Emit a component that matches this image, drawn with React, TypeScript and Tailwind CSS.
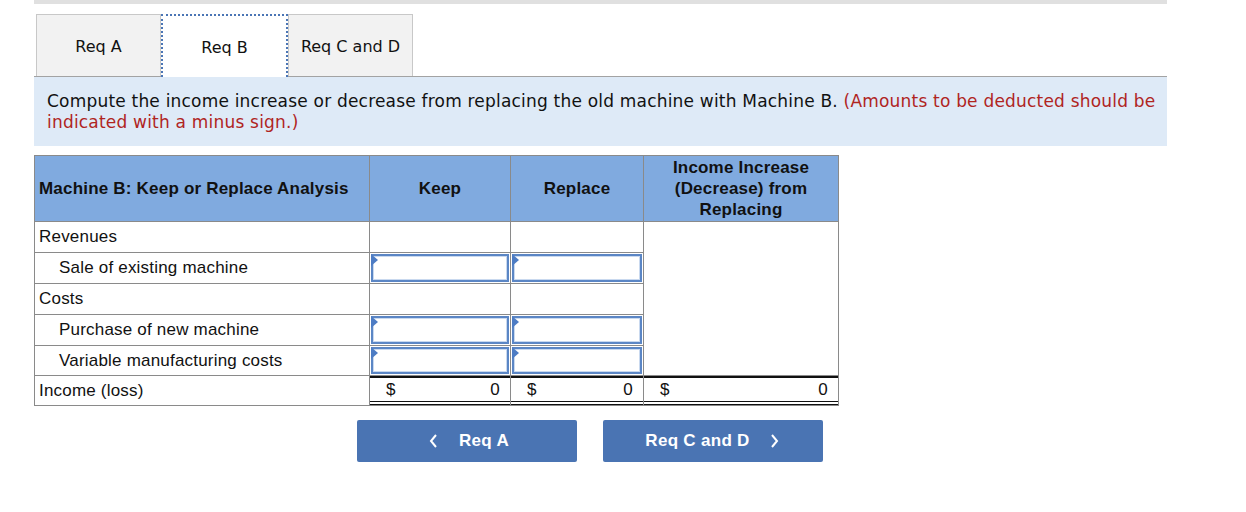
import React from "react";

const rows = [
  { label: "Revenues", indent: false, input: false },
  { label: "Sale of existing machine", indent: true, input: true },
  { label: "Costs", indent: false, input: false },
  { label: "Purchase of new machine", indent: true, input: true },
  { label: "Variable manufacturing costs", indent: true, input: true },
];

function InputCell() {
  return (
    <div className="relative h-full w-full p-px">
      <div className="h-full w-full border-2 border-[#5b86c5] bg-white shadow-[inset_0_0_0_1px_#c9d9ef]" />
      <span className="absolute left-px top-px h-0 w-0 border-y-[6px] border-l-[7px] border-y-transparent border-l-[#4d7cc4]" />
    </div>
  );
}

export default function App() {
  return (
    <div className="min-h-[512px] w-[1246px] bg-white pl-[34px] font-['DejaVu_Sans',sans-serif]">
      <div className="h-1 w-[1133px] bg-[#e0e0e0]" />

      {/* tabs */}
      <div className="mt-[10px] flex w-[1133px] border-b border-[#a3a3a3] pl-[2px]">
        <div className="flex h-[62px] w-[125px] items-center justify-center border border-b-0 border-[#c8c8c8] bg-[#f2f2f2] pt-[3px] text-[16px] text-[#111]">
          Req A
        </div>
        <div className="-mb-px flex h-[63px] w-[127px] items-center justify-center border-2 border-b-0 border-dotted border-[#4a75b5] bg-white pt-[3px] text-[16px] text-[#111]">
          Req B
        </div>
        <div className="flex h-[62px] w-[125px] items-center justify-center border border-b-0 border-[#c8c8c8] bg-[#f2f2f2] pt-[3px] text-[16px] text-[#111]">
          Req C and D
        </div>
      </div>

      {/* instructions */}
      <div className="w-[1133px] bg-[#deeaf7] pb-[13px] pl-[13px] pr-[6px] pt-[14px] text-[17px] leading-[21px] tracking-[0.2px] text-[#111]">
        Compute the income increase or decrease from replacing the old machine with Machine B.{" "}
        <span className="text-[#b0251f]">(Amounts to be deducted should be indicated with a minus sign.)</span>
      </div>

      {/* table */}
      <table className="mt-[9px] w-[805px] border-collapse font-['Liberation_Sans',Arial,sans-serif] text-[17px] tracking-[0.2px] text-[#111]">
        <colgroup>
          <col className="w-[335px]" />
          <col className="w-[141px]" />
          <col className="w-[133px]" />
          <col className="w-[195px]" />
        </colgroup>
        <thead>
          <tr className="h-[66px] bg-[#80aadf] font-bold">
            <th className="border border-[#8a8a8a] px-1 text-left">Machine B: Keep or Replace Analysis</th>
            <th className="border border-[#8a8a8a]">Keep</th>
            <th className="border border-[#8a8a8a]">Replace</th>
            <th className="border border-[#8a8a8a] px-2 leading-[21px]">Income Increase (Decrease) from Replacing</th>
          </tr>
        </thead>
        <tbody>
          {rows.map((r, i) => (
            <tr key={r.label}>
              <td className={`border border-[#8a8a8a] ${r.indent ? "pl-[24px]" : "pl-1"}`}>{r.label}</td>
              <td className="border border-[#8a8a8a] p-0">
                <div className={i === 4 ? "h-[29px]" : "h-[30px]"}>{r.input && <InputCell />}</div>
              </td>
              <td className="border border-[#8a8a8a] p-0">
                <div className={i === 4 ? "h-[29px]" : "h-[30px]"}>{r.input && <InputCell />}</div>
              </td>
              {i === 0 && <td rowSpan={5} className="border border-[#8a8a8a]" />}
            </tr>
          ))}
          <tr>
            <td className="border border-[#8a8a8a] pl-1">Income (loss)</td>
            {[0, 1, 2].map((k) => (
              <td key={k} className="border-x border-b border-[#8a8a8a] p-0">
                <div className="flex h-[29px] items-center justify-between border-t-2 border-b-[4px] border-double border-t-[#111] border-b-[#111] pl-[16px] pr-[10px]">
                  <span>$</span>
                  <span>0</span>
                </div>
              </td>
            ))}
          </tr>
        </tbody>
      </table>

      {/* nav buttons */}
      <div className="mt-[14px] flex gap-[26px] pl-[323px] font-['Liberation_Sans',Arial,sans-serif]">
        <button className="flex h-[42px] w-[220px] items-center justify-center gap-[21px] rounded-[2px] bg-[#4a74b3] pl-[4px] text-[17px] font-bold tracking-[0.3px] text-white">
          <svg width="9" height="14" viewBox="0 0 9 14" fill="none" stroke="white" strokeWidth="2"><path d="M7 1 L2 7 L7 13" /></svg>
          Req A
        </button>
        <button className="flex h-[42px] w-[220px] items-center justify-center gap-[20px] rounded-[2px] bg-[#4a74b3] pr-[2px] text-[17px] font-bold tracking-[0.3px] text-white">
          Req C and D
          <svg width="9" height="14" viewBox="0 0 9 14" fill="none" stroke="white" strokeWidth="2"><path d="M2 1 L7 7 L2 13" /></svg>
        </button>
      </div>
    </div>
  );
}
